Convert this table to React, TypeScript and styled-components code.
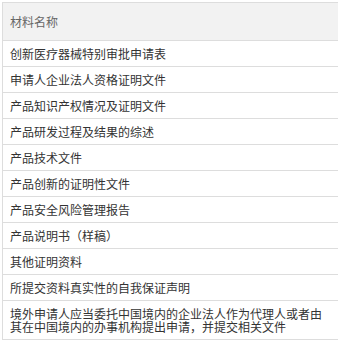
import React from "react";
import styled, { createGlobalStyle } from "styled-components";

const Global = createGlobalStyle`
  html, body {
    margin: 0;
    padding: 0;
    background: #ffffff;
    overflow: hidden;
  }
  body {
    font-family: "Noto Sans CJK SC", "Liberation Sans", sans-serif;
  }
`;

const Wrap = styled.div`
  padding: 2px 0 0 2px;
`;

const Table = styled.table`
  width: 338px;
  border-collapse: collapse;
  table-layout: fixed;
  font-size: 12px;
  line-height: 13px;
`;

const HeadCell = styled.th`
  height: 38px;
  padding: 0 7px;
  box-sizing: border-box;
  background: #f2f2f2;
  border: 1px solid #dddddd;
  color: #666666;
  font-weight: normal;
  text-align: left;
  vertical-align: middle;
`;

const Cell = styled.td`
  padding: 6px 7px;
  border: 1px solid #dddddd;
  color: #333333;
  text-align: left;
  vertical-align: middle;
`;

const items = [
  "创新医疗器械特别审批申请表",
  "申请人企业法人资格证明文件",
  "产品知识产权情况及证明文件",
  "产品研发过程及结果的综述",
  "产品技术文件",
  "产品创新的证明性文件",
  "产品安全风险管理报告",
  "产品说明书（样稿）",
  "其他证明资料",
  "所提交资料真实性的自我保证声明",
  "境外申请人应当委托中国境内的企业法人作为代理人或者由其在中国境内的办事机构提出申请，并提交相关文件",
];

export default function App() {
  return (
    <>
      <Global />
      <Wrap>
        <Table>
          <thead>
            <tr>
              <HeadCell>材料名称</HeadCell>
            </tr>
          </thead>
          <tbody>
            {items.map((t) => (
              <tr key={t}>
                <Cell>{t}</Cell>
              </tr>
            ))}
          </tbody>
        </Table>
      </Wrap>
    </>
  );
}
